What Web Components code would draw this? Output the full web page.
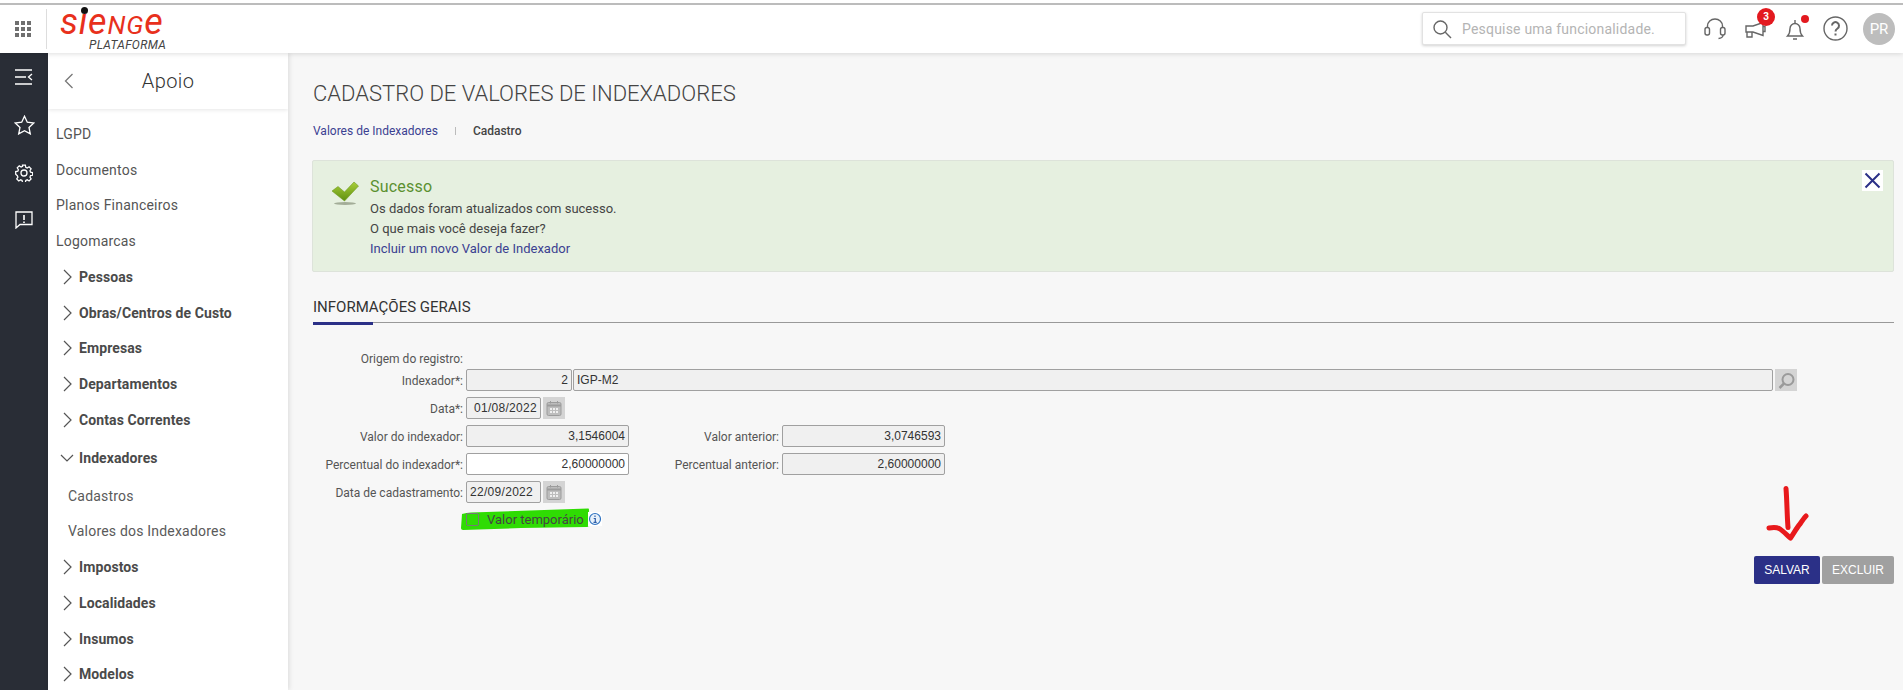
<!DOCTYPE html>
<html lang="pt-BR">
<head>
<meta charset="utf-8">
<title>Cadastro de valores de indexadores</title>
<style>
  html, body { margin: 0; height: 100%; overflow: hidden; background: #f7f7f7; }
  body { font-family: Roboto, "Liberation Sans", sans-serif; color: #444; }
</style>
</head>
<body>
<app-shell>
  <app-header slot="header"></app-header>
  <app-rail slot="rail"></app-rail>
  <side-menu slot="menu" heading="Apoio">
    <menu-item label="LGPD"></menu-item>
    <menu-item label="Documentos"></menu-item>
    <menu-item label="Planos Financeiros"></menu-item>
    <menu-item label="Logomarcas"></menu-item>
    <menu-item label="Pessoas" group></menu-item>
    <menu-item label="Obras/Centros de Custo" group></menu-item>
    <menu-item label="Empresas" group></menu-item>
    <menu-item label="Departamentos" group></menu-item>
    <menu-item label="Contas Correntes" group></menu-item>
    <menu-item label="Indexadores" group open></menu-item>
    <menu-item label="Cadastros" child></menu-item>
    <menu-item label="Valores dos Indexadores" child></menu-item>
    <menu-item label="Impostos" group></menu-item>
    <menu-item label="Localidades" group></menu-item>
    <menu-item label="Insumos" group></menu-item>
    <menu-item label="Modelos" group></menu-item>
  </side-menu>
  <page-content slot="main"></page-content>
</app-shell>

<script>
class AppShell extends HTMLElement {
  constructor() {
    super();
    this.attachShadow({ mode: "open" }).innerHTML = `
      <style>
        :host { display: grid; grid-template-columns: 48px 240px 1fr; grid-template-rows: 53px 637px; width: 1903px; height: 690px; overflow: hidden; }
        .top { grid-column: 1 / 4; position: relative; z-index: 3; }
        .rail { position: relative; z-index: 1; }
        .menu { position: relative; z-index: 2; box-shadow: 1px 0 5px rgba(0,0,0,.12); overflow: hidden; }
      </style>
      <div class="top"><slot name="header"></slot></div>
      <div class="rail"><slot name="rail"></slot></div>
      <div class="menu"><slot name="menu"></slot></div>
      <div><slot name="main"></slot></div>`;
  }
}

class AppHeader extends HTMLElement {
  constructor() {
    super();
    this.attachShadow({ mode: "open" }).innerHTML = `
      <style>
        :host { display: flex; align-items: center; height: 53px; box-sizing: border-box; background: #fff; border-top: 2px solid #fff; box-shadow: 0 1px 5px rgba(0,0,0,.13); position: relative; }
        .strip { position: absolute; left: 0; right: 0; top: 1px; height: 2px; background: #bcbcbc; }
        .apps { width: 47px; height: 40px; margin-top: 2px; display: flex; align-items: center; justify-content: center; border-right: 1px solid #ddd; box-sizing: border-box; }
        .logo { position: relative; align-self: flex-start; width: 104px; height: 44px; margin-left: 13px; margin-top: 4px; }
        .word { position: absolute; left: 0; top: 1px; font: italic 400 36px/30px Roboto, sans-serif; letter-spacing: .8px; color: #e8301c; white-space: nowrap; }
        .word span { font-size: 26px; }
        .dot { position: absolute; left: 20.500px; top: 1px; width: 7px; height: 7px; border-radius: 50%; background: #111; }
        .sub { position: absolute; left: 29px; top: 33px; font: italic 400 12px/12px Roboto, sans-serif; letter-spacing: .3px; color: #444; white-space: nowrap; }
        .right { margin-left: auto; display: flex; align-items: center; margin-top: 2px; padding-right: 8px; }
        .search { width: 264px; height: 33px; box-sizing: border-box; background: #fff; border: 1px solid #e2e2e2; border-radius: 2px; box-shadow: 0 1px 3px rgba(0,0,0,.18); display: flex; align-items: center; padding-left: 9px; font-size: 14px; letter-spacing: .2px; color: #b4b4b4; gap: 10px; }
        .icons { display: flex; align-items: center; margin-left: 9px; }
        .ic { width: 40px; height: 32px; display: flex; align-items: center; justify-content: center; position: relative; }
        .badge { position: absolute; left: 22px; top: -5px; width: 18px; height: 18px; border-radius: 50%; background: #e3191f; color: #fff; font: 700 10px/18px Roboto, sans-serif; text-align: center; }
        .pip { position: absolute; left: 26px; top: 2px; width: 8px; height: 8px; border-radius: 50%; background: #e3191f; }
        .avatar { width: 32px; height: 32px; border-radius: 50%; background: #bdbdbd; color: #fff; font: 400 15px/32px Roboto, sans-serif; text-align: center; margin-left: 8px; }
        svg { display: block; fill: none; stroke: #666; stroke-width: 1.4; }
      </style>
      <div class="strip"></div>
      <div class="apps">
        <svg width="16" height="16" style="stroke:none;fill:#6f6f6f">
          <rect x="0" y="0" width="4" height="4"/><rect x="6" y="0" width="4" height="4"/><rect x="12" y="0" width="4" height="4"/>
          <rect x="0" y="6" width="4" height="4"/><rect x="6" y="6" width="4" height="4"/><rect x="12" y="6" width="4" height="4"/>
          <rect x="0" y="12" width="4" height="4"/><rect x="6" y="12" width="4" height="4"/><rect x="12" y="12" width="4" height="4"/>
        </svg>
      </div>
      <div class="logo">
        <span class="word">sie<span>NG</span>e</span><span class="dot"></span>
        <span class="sub">PLATAFORMA</span>
      </div>
      <div class="right">
        <div class="search">
          <svg width="20" height="20" viewBox="0 0 20 20"><circle cx="8.500" cy="8.500" r="6.500"/><path d="M13.300 13.300L19 19"/></svg>
          <span>Pesquise uma funcionalidade.</span>
        </div>
        <div class="icons">
          <div class="ic"><svg width="24" height="24" viewBox="0 0 24 24"><path d="M4.500 11V9a7.500 7 0 0 1 15 0v2"/><rect x="2" y="10.500" width="4.500" height="7.500" rx="2"/><rect x="17.500" y="10.500" width="4.500" height="7.500" rx="2"/><path d="M20 18c0 2-2 3.500-4.500 3.500"/></svg></div>
          <div class="ic"><svg width="24" height="24" viewBox="0 0 24 24"><path d="M3 9h7L20 5.500v13L10 15H3z"/><path d="M4 15v5h5v-5"/><path d="M20 9.500h2v5h-2"/></svg><span class="badge">3</span></div>
          <div class="ic"><svg width="24" height="24" viewBox="0 0 24 24"><path d="M4.500 19c1.500-1.500 2.500-4 2.500-7.500a5 5 0 0 1 10 0c0 3.500 1 6 2.500 7.500z"/><path d="M12 6.500V3M10 22h4"/></svg><span class="pip"></span></div>
          <div class="ic"><svg width="25" height="25" viewBox="0 0 25 25"><circle cx="12.500" cy="12.500" r="11.500"/><path d="M9 9.500a3.500 3.500 0 1 1 5.500 3c-1.400 1-2 1.600-2 3" stroke-width="2"/><path d="M12.500 17.500v2" stroke-width="2"/></svg></div>
        </div>
        <div class="avatar">PR</div>
      </div>`;
  }
}

class AppRail extends HTMLElement {
  constructor() {
    super();
    this.attachShadow({ mode: "open" }).innerHTML = `
      <style>
        :host { display: flex; flex-direction: column; align-items: center; height: 637px; background: #292d36; }
        svg { display: block; fill: none; stroke: #fff; stroke-width: 1.300; }
        .i { height: 48px; display: flex; align-items: center; justify-content: center; }
      </style>
      <div class="i"><svg width="18" height="16" viewBox="0 0 18 16"><path d="M0 1h17M0 8h11M0 15h17" stroke-width="1.600"/><path d="M17 5l-3.500 3 3.500 3"/></svg></div>
      <div class="i"><svg width="21" height="20" viewBox="0 0 21 20"><path d="M10.500 1.200l2.800 6 6.500.8-4.800 4.400 1.300 6.500-5.800-3.200-5.800 3.200 1.300-6.500L1.200 8l6.500-.8z"/></svg></div>
      <div class="i"><svg width="18" height="18" viewBox="0 0 18 18"><circle cx="9" cy="9" r="3"/><path d="M7.500 1h3l.4 2.200 1.500.7 1.900-1.200 2.100 2.100-1.200 1.900.6 1.500 2.200.4v2.800l-2.200.4-.6 1.500 1.200 1.900-2.100 2.100-1.900-1.200-1.500.7-.4 2.200h-3l-.4-2.200-1.500-.7-1.900 1.200-2.100-2.100 1.200-1.900-.6-1.500L.5 10.400V7.600l2.200-.4.600-1.500-1.200-1.900 2.100-2.100 1.900 1.200 1.500-.7z" transform="translate(.2 .2) scale(.97)"/></svg></div>
      <div class="i" style="height:46px"><svg width="18" height="18" viewBox="0 0 18 18"><path d="M1 1h16v12.500H5L1 17z"/><path d="M9 4v5M9 10.500v1.500" stroke-width="1.600"/></svg></div>`;
  }
}

class SideMenu extends HTMLElement {
  constructor() {
    super();
    this.attachShadow({ mode: "open" }).innerHTML = `
      <style>
        :host { display: block; height: 637px; background: #fff; overflow: hidden; }
        .head { height: 56px; display: flex; align-items: center; position: relative; box-shadow: 0 1px 4px rgba(0,0,0,.1); }
        .back { position: absolute; left: 16px; top: 20px; }
        h2 { flex: 1; margin: 0; text-align: center; font: 300 20px/28px Roboto, sans-serif; letter-spacing: .4px; color: #333; }
        .list { padding-top: 7px; }
        svg { display: block; fill: none; stroke: #777; stroke-width: 1.300; }
      </style>
      <div class="head">
        <svg class="back" width="10" height="16" viewBox="0 0 10 16"><path d="M8.500 1L1.500 8l7 7"/></svg>
        <h2></h2>
      </div>
      <div class="list"><slot></slot></div>`;
    this.shadowRoot.querySelector("h2").textContent = this.getAttribute("heading");
  }
}

class MenuItem extends HTMLElement {
  constructor() {
    super();
    const open = this.hasAttribute("open");
    const chevron = open
      ? '<path d="M1 5l6 6 6-6"/>'
      : '<path d="M4 1l7 7-7 7"/>';
    this.attachShadow({ mode: "open" }).innerHTML = `
      <style>
        :host { display: flex; align-items: center; height: 35.750px; padding-left: 8px; font-size: 14px; letter-spacing: .2px; color: #555; white-space: nowrap; }
        :host([group]) { font-weight: 700; letter-spacing: .1px; color: #4a4a4a; padding-left: 12px; }
        :host([open]) { height: 40px; }
        :host([child]) { padding-left: 20px; color: #5a5a5a; }
        svg { display: none; fill: none; stroke: #555; stroke-width: 1.200; margin-right: 5px; flex: none; }
        :host([group]) svg { display: block; }
      </style>
      <svg width="14" height="16" viewBox="0 0 14 16">${chevron}</svg><span></span>`;
    this.shadowRoot.querySelector("span").textContent = this.getAttribute("label");
  }
}

class SuccessAlert extends HTMLElement {
  constructor() {
    super();
    this.attachShadow({ mode: "open" }).innerHTML = `
      <style>
        :host { display: flex; position: relative; height: 112px; box-sizing: border-box; background: #e6f0e0; border: 1px solid #dde3da; border-radius: 2px; padding: 16px 0 0 19px; font-size: 13px; color: #444; }
        .text { margin-left: 10px; }
        h3 { margin: 0 0 2px; font: 400 16px/20px Roboto, sans-serif; letter-spacing: .2px; color: #5b9030; }
        div.line { line-height: 20px; }
        .link { color: #3b4191; }
        .close { position: absolute; right: 10px; top: 9px; width: 21px; height: 21px; background: #fff; display: flex; align-items: center; justify-content: center; }
        svg { display: block; }
      </style>
      <svg width="28" height="28" viewBox="0 0 28 28" style="margin-top:2px">
        <defs><linearGradient id="g" x1="0" y1="0" x2="0" y2="1"><stop offset="0" stop-color="#a8cf3a"/><stop offset="1" stop-color="#5f8f10"/></linearGradient></defs>
        <ellipse cx="13" cy="24.500" rx="11" ry="1.500" fill="#a3ad98"/>
        <path d="M0 12l6-4.500 6.500 5.500L22 3l4.500 4L12.500 22z" fill="url(#g)" stroke="#6f9a20" stroke-width=".6"/>
      </svg>
      <div class="text">
        <h3>Sucesso</h3>
        <div class="line">Os dados foram atualizados com sucesso.</div>
        <div class="line">O que mais você deseja fazer?</div>
        <div class="line link">Incluir um novo Valor de Indexador</div>
      </div>
      <div class="close"><svg width="17" height="17" viewBox="0 0 17 17"><path d="M1.500 1.500l14 14M15.500 1.500l-14 14" stroke="#2b3087" stroke-width="2" fill="none"/></svg></div>`;
  }
}

class FormRow extends HTMLElement {
  constructor() {
    super();
    this.attachShadow({ mode: "open" }).innerHTML = `
      <style>
        :host { display: flex; align-items: center; height: 28px; }
      </style>
      <slot></slot>`;
  }
}

class FieldLabel extends HTMLElement {
  constructor() {
    super();
    this.attachShadow({ mode: "open" }).innerHTML = `
      <style>
        :host { display: block; width: 153px; padding: 1px 3px 0 0; box-sizing: border-box; text-align: right; font-size: 12px; color: #555; white-space: nowrap; flex: none; }
      </style>
      <slot></slot>`;
  }
}

class FieldBox extends HTMLElement {
  constructor() {
    super();
    this.attachShadow({ mode: "open" }).innerHTML = `
      <style>
        :host { display: block; height: 22px; box-sizing: border-box; width: var(--w, 163px); border: 1px solid #a0a0a0; border-radius: 2px; background: #f0f0f0; font: 400 12px/20px "Liberation Sans", sans-serif; color: #333; padding: 0 3px; white-space: nowrap; flex: none; text-align: right; }
        :host([left]) { text-align: left; }
        :host([editable]) { background: #fff; }
      </style>
      <slot></slot>`;
  }
}

class IconButton extends HTMLElement {
  constructor() {
    super();
    const search = this.getAttribute("icon") === "search";
    const glyph = search
      ? '<circle cx="10" cy="7.500" r="5.500" stroke="#9a9a9a" stroke-width="2" fill="none"/><path d="M6 11.500L1.500 16" stroke="#9a9a9a" stroke-width="2.500"/>'
      : '<rect x="1" y="2.500" width="14" height="13" rx="1.500" fill="#bdbdbd" stroke="#9c9c9c"/><path d="M1 5.500h14" stroke="#9c9c9c" stroke-width="2"/><path d="M4 8h2v2H4zM7 8h2v2H7zM10 8h2v2h-2zM4 11h2v2H4zM7 11h2v2H7zM10 11h2v2h-2z" fill="#efefef"/><path d="M4.500 1v2.500M11.500 1v2.500" stroke="#9c9c9c"/>';
    this.attachShadow({ mode: "open" }).innerHTML = `
      <style>
        :host { display: flex; align-items: center; justify-content: center; width: 22px; height: 22px; background: #d4d4d4; margin-left: 2px; flex: none; }
        svg { display: block; }
      </style>
      <svg width="17" height="17" viewBox="0 0 17 17">${glyph}</svg>`;
  }
}

class ActionButton extends HTMLElement {
  constructor() {
    super();
    this.attachShadow({ mode: "open" }).innerHTML = `
      <style>
        :host { display: flex; align-items: center; justify-content: center; height: 28px; border-radius: 2px; font: 400 12px/28px "Liberation Sans", sans-serif; color: #fff; background: #2b3087; box-sizing: border-box; }
        :host([muted]) { background: #a0a0a0; }
      </style>
      <slot></slot>`;
  }
}

class PageContent extends HTMLElement {
  constructor() {
    super();
    this.attachShadow({ mode: "open" }).innerHTML = `
      <style>
        :host { display: block; position: relative; height: 637px; padding: 0 9px 0 25px; box-sizing: border-box; background: #f7f7f7; }
        h1 { margin: 0; padding-top: 29px; font: 300 22px/24px Roboto, sans-serif; color: #444; white-space: nowrap; }
        .crumbs { display: flex; align-items: center; margin-top: 17px; height: 16px; font-size: 12px; }
        .crumbs a { color: #3b4191; }
        .crumbs i { width: 1px; height: 8px; background: #bbb; margin: 0 17px; }
        .crumbs b { font-weight: 500; color: #444; }
        success-alert { margin: 21px 0 0 -1px; }
        .tab { margin-top: 25px; height: 25px; border-bottom: 1px solid #999; position: relative; font: 400 15px/20px Roboto, sans-serif; color: #333; white-space: nowrap; }
        .tab::after { content: ""; position: absolute; left: 0; bottom: -3px; width: 60px; height: 3px; background: #2b3087; }
        .form { margin-top: 24px; }
        .form .first { height: 19px; align-items: flex-end; }
        .check { position: relative; display: flex; align-items: center; height: 22px; margin: 2px 0 0 153px; font-size: 13px; color: #444; white-space: nowrap; }
        .brush { position: absolute; left: -5px; top: 0; display: block; }
        .box { position: relative; width: 13px; height: 13px; border: 1px solid #777; border-radius: 2px; box-sizing: border-box; margin-right: 8px; }
        .lbl { position: relative; }
        .info { position: absolute; left: 122px; top: 4px; display: block; }
        .buttons { display: flex; justify-content: flex-end; gap: 2px; margin-top: 26px; }
        .buttons action-button:first-child { width: 66px; }
        .buttons action-button:last-child { width: 72px; }
        .arrow { position: absolute; left: 1474px; top: 433px; }
      </style>
      <h1>CADASTRO DE VALORES DE INDEXADORES</h1>
      <div class="crumbs"><a>Valores de Indexadores</a><i></i><b>Cadastro</b></div>
      <success-alert></success-alert>
      <div class="tab">INFORMAÇÕES GERAIS</div>
      <div class="form">
        <form-row class="first"><field-label>Origem do registro:</field-label></form-row>
        <form-row>
          <field-label>Indexador*:</field-label>
          <field-box style="--w:106px">2</field-box>
          <field-box left style="--w:1200px;margin-left:1px">IGP-M2</field-box>
          <icon-button icon="search"></icon-button>
        </form-row>
        <form-row>
          <field-label>Data*:</field-label>
          <field-box style="--w:75px;letter-spacing:.3px">01/08/2022</field-box>
          <icon-button></icon-button>
        </form-row>
        <form-row>
          <field-label>Valor do indexador:</field-label>
          <field-box>3,1546004</field-box>
          <field-label>Valor anterior:</field-label>
          <field-box>3,0746593</field-box>
        </form-row>
        <form-row>
          <field-label>Percentual do indexador*:</field-label>
          <field-box editable>2,60000000</field-box>
          <field-label>Percentual anterior:</field-label>
          <field-box>2,60000000</field-box>
        </form-row>
        <form-row>
          <field-label>Data de cadastramento:</field-label>
          <field-box left style="--w:75px;letter-spacing:.3px">22/09/2022</field-box>
          <icon-button></icon-button>
        </form-row>
        <div class="check">
          <svg class="brush" width="128" height="22" viewBox="0 0 128 22"><path d="M1 6c3-1 6-1 9-1.500L127 .5c1 0 1 1 1 2l-.5 15c0 1-1 1.500-2 1.500L60 20 2 22c-1 0-2-1-2-2z" fill="#2fdc03"/></svg>
          <span class="box"></span>
          <span class="lbl">Valor temporário</span>
          <svg class="info" width="14" height="14" viewBox="0 0 14 14"><rect width="14" height="14" fill="#fff"/><circle cx="7" cy="7" r="5.500" fill="#e8f1fa" stroke="#2f72c0" stroke-width="1.200"/><path d="M7 3.500v1.400M5.700 6.500h1.600v3.500M5.500 10.300h3.200" stroke="#2f5fa8" stroke-width="1.200" fill="none"/></svg>
        </div>
      </div>
      <div class="buttons"><action-button>SALVAR</action-button><action-button muted>EXCLUIR</action-button></div>
      <svg class="arrow" width="50" height="62" viewBox="0 0 50 62"><path d="M24 2.500c1 12 1 27 2 39" fill="none" stroke="#e8191c" stroke-width="5" stroke-linecap="round"/><path d="M7 42c5-1 8-1 11 1s7 6 10.500 9c3.500-5 6-10 9.500-14 2-3 4-6 6-8" fill="none" stroke="#e8191c" stroke-width="5" stroke-linecap="round" stroke-linejoin="round"/></svg>`;
  }
}

customElements.define("app-shell", AppShell);
customElements.define("app-header", AppHeader);
customElements.define("app-rail", AppRail);
customElements.define("side-menu", SideMenu);
customElements.define("menu-item", MenuItem);
customElements.define("success-alert", SuccessAlert);
customElements.define("form-row", FormRow);
customElements.define("field-label", FieldLabel);
customElements.define("field-box", FieldBox);
customElements.define("icon-button", IconButton);
customElements.define("action-button", ActionButton);
customElements.define("page-content", PageContent);
</script>
</body>
</html>
